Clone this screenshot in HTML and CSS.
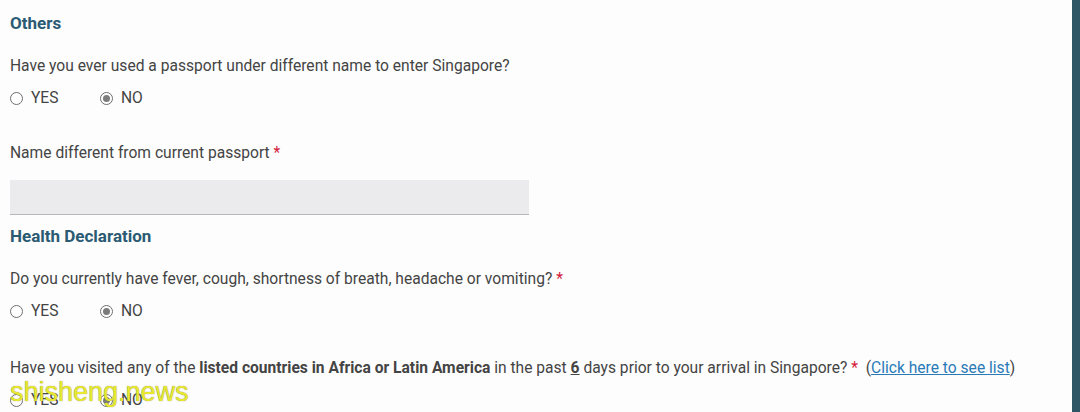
FILE: index.html
```html
<!DOCTYPE html>
<html lang="en">
<head>
    <title>Arrival Card - Others</title>
    <link rel="stylesheet" href="styles.css">
</head>
<body>
    <div class="page">
        <div class="form">
            <!-- Others -->
            <h2 class="section-title">Others</h2>
            <div class="question">
                <p class="question-text">Have you ever used a passport under different name to enter Singapore?</p>
                <div class="radio-row">
                    <label class="radio"><span class="dot"></span>YES</label>
                    <label class="radio"><span class="dot checked"></span>NO</label>
                </div>
            </div>

            <div class="field">
                <p class="question-text">Name different from current passport <span class="req">*</span></p>
                <div class="text-input"></div>
            </div>

            <!-- Health Declaration -->
            <h2 class="section-title">Health Declaration</h2>
            <div class="question">
                <p class="question-text">Do you currently have fever, cough, shortness of breath, headache or vomiting? <span class="req">*</span></p>
                <div class="radio-row">
                    <label class="radio"><span class="dot"></span>YES</label>
                    <label class="radio"><span class="dot checked"></span>NO</label>
                </div>
            </div>

            <div class="question spaced">
                <p class="question-text">Have you visited any of the <b>listed countries in Africa or Latin America</b> in the past <b class="ul">6</b> days prior to your arrival in Singapore? <span class="req">*</span>&nbsp; (<a href="#" class="link">Click here to see list</a>)</p>
                <div class="radio-row">
                    <label class="radio"><span class="dot"></span>YES</label>
                    <label class="radio"><span class="dot checked"></span>NO</label>
                </div>
            </div>
        </div>
        <div class="side-bar"></div>
    </div>
    <div class="watermark">shisheng.news</div>
</body>
</html>
```

FILE: styles.css
```css
body {
    margin: 0;
    padding: 0;
    background-color: #fdfdfd;
    font-family: Roboto, "Liberation Sans", Arial, sans-serif;
    color: #444;
    overflow: hidden;
}

.page {
    display: flex;
    height: 412px;
}

.form {
    flex: 1;
    padding: 13px 0 0 10px;
}

.side-bar {
    width: 8px;
    background-color: #2f5664;
}

.section-title {
    margin: 0;
    font-size: 17px;
    font-weight: 700;
    color: #2b5a73;
    line-height: 21px;
}

.question-text {
    margin: 0;
    font-size: 15.6px;
    line-height: 20px;
}

.question {
    padding-top: 22px;
}

.question.spaced {
    padding-top: 37px;
}

.radio-row {
    display: flex;
    margin-top: 12px;
    height: 20px;
    align-items: center;
}

.radio {
    display: flex;
    align-items: center;
    font-size: 15.6px;
    width: 90px;
}

.dot {
    width: 11px;
    height: 11px;
    border: 1px solid #6f6f6f;
    border-radius: 50%;
    margin-right: 8px;
    position: relative;
    background: #fff;
}

.dot.checked::after {
    content: "";
    position: absolute;
    left: 2px;
    top: 2px;
    width: 7px;
    height: 7px;
    border-radius: 50%;
    background: #7b7b7b;
}

.field {
    padding-top: 35px;
}

.text-input {
    width: 519px;
    height: 34px;
    margin-top: 17px;
    background-color: #ebebed;
    border-bottom: 1px solid #b8b8b8;
    margin-bottom: 11px;
}

.req {
    color: #d2203a;
}

.ul {
    text-decoration: underline;
}

.link {
    color: #2a7ab8;
    text-decoration: underline;
}

.watermark {
    position: absolute;
    left: 10px;
    top: 377px;
    font-family: "Liberation Sans", Arial, sans-serif;
    font-size: 27px;
    color: #e8e830;
    text-shadow: 0 0 1px #77772a;
}
```
